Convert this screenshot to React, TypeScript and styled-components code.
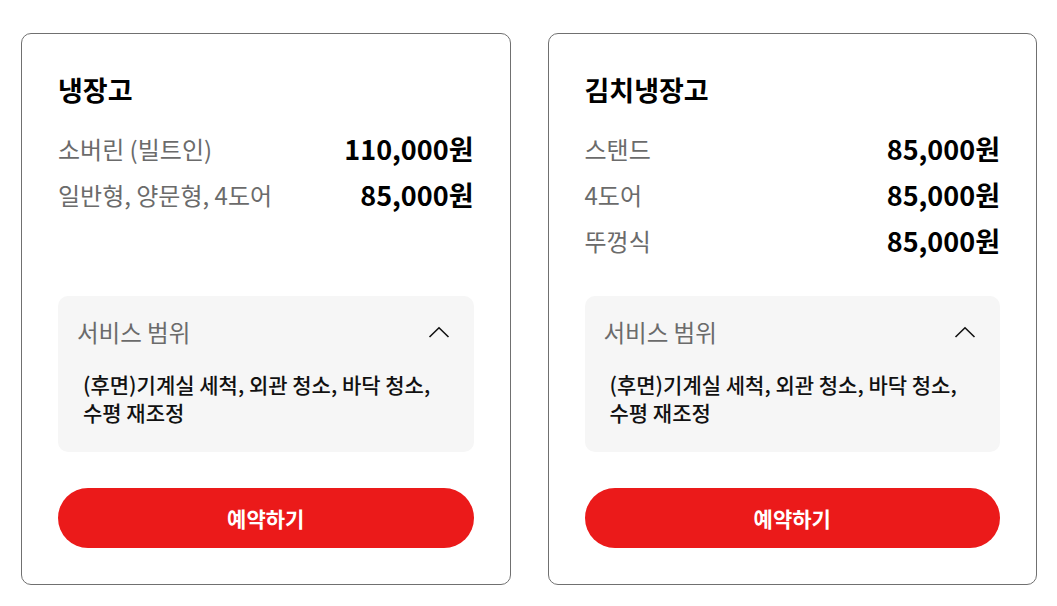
import styled, { createGlobalStyle } from 'styled-components';

const GlobalStyle = createGlobalStyle`
  * {
    box-sizing: border-box;
  }

  body {
    margin: 0;
    background: #fff;
    font-family: 'Noto Sans CJK KR', 'Noto Sans', sans-serif;
    color: #111;
  }
`;

type Item = { label: string; price: string };

type Product = {
  title: string;
  items: Item[];
  scope: string;
};

const products: Product[] = [
  {
    title: '냉장고',
    items: [
      { label: '소버린 (빌트인)', price: '110,000원' },
      { label: '일반형, 양문형, 4도어', price: '85,000원' },
    ],
    scope: '(후면)기계실 세척, 외관 청소, 바닥 청소, 수평 재조정',
  },
  {
    title: '김치냉장고',
    items: [
      { label: '스탠드', price: '85,000원' },
      { label: '4도어', price: '85,000원' },
      { label: '뚜껑식', price: '85,000원' },
    ],
    scope: '(후면)기계실 세척, 외관 청소, 바닥 청소, 수평 재조정',
  },
];

const ChevronUp = () => (
  <svg width="22" height="12" viewBox="0 0 22 12" fill="none">
    <path d="M1.5 11L11 1.8L20.5 11" stroke="#111" strokeWidth="1.6" />
  </svg>
);

const App = () => {
  return (
    <>
      <GlobalStyle />
      <Root>
        {products.map((product) => (
          <Card key={product.title}>
            <Title>{product.title}</Title>
            <PriceList>
              {product.items.map((item) => (
                <PriceRow key={item.label}>
                  <Label>{item.label}</Label>
                  <Price>{item.price}</Price>
                </PriceRow>
              ))}
            </PriceList>
            <Scope>
              <ScopeHeader>
                <ScopeTitle>서비스 범위</ScopeTitle>
                <ChevronUp />
              </ScopeHeader>
              <ScopeText>{product.scope}</ScopeText>
            </Scope>
            <ReserveButton type="button">예약하기</ReserveButton>
          </Card>
        ))}
      </Root>
    </>
  );
};

const Root = styled.main`
  display: grid;
  grid-template-columns: 1fr 1fr;
  gap: 37px;
  padding: 33px 20px 21px 21px;
`;

const Card = styled.section`
  display: flex;
  flex-direction: column;
  border: 1px solid #707070;
  border-radius: 10px;
  padding: 36px;
`;

const Title = styled.h2`
  margin: 0;
  font-size: 27px;
  font-weight: 700;
  line-height: 40px;
  color: #000;
`;

const PriceList = styled.ul`
  flex: 1;
  list-style: none;
  margin: 15px 0 33px;
  padding: 0;
`;

const PriceRow = styled.li`
  display: flex;
  justify-content: space-between;
  align-items: center;
  height: 46px;
`;

const Label = styled.span`
  font-size: 24px;
  color: #6b6b6b;
`;

const Price = styled.span`
  font-size: 27px;
  font-weight: 700;
  color: #000;
`;

const Scope = styled.div`
  background: #f6f6f6;
  border-radius: 10px;
  padding: 20px 24px 26px 19px;
`;

const ScopeHeader = styled.div`
  display: flex;
  justify-content: space-between;
  align-items: center;
  height: 32px;
`;

const ScopeTitle = styled.span`
  font-size: 23.5px;
  color: #6b6b6b;
`;

const ScopeText = styled.p`
  margin: 22px 0 0;
  padding-left: 6px;
  font-size: 21px;
  font-weight: 500;
  line-height: 28px;
  color: #111;
`;

const ReserveButton = styled.button`
  margin-top: 36px;
  height: 60px;
  border: none;
  border-radius: 30px;
  background: #eb1a1a;
  color: #fff;
  font-family: inherit;
  font-size: 21px;
  font-weight: 700;
  cursor: pointer;
`;

export default App;
